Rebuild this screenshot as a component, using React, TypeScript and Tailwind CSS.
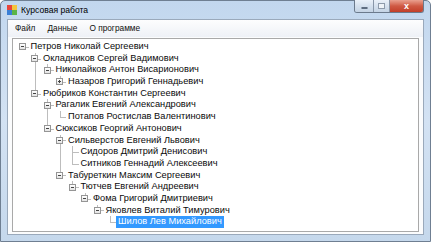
import { Fragment } from "react";

type Node = {
  name: string;
  open?: boolean;
  selected?: boolean;
  children?: Node[];
};

const tree: Node = {
  name: "Петров Николай Сергеевич",
  open: true,
  children: [
    {
      name: "Окладников Сергей Вадимович",
      open: true,
      children: [
        {
          name: "Николайков Антон Висарионович",
          open: true,
          children: [{ name: "Назаров Григорий Геннадьевич", open: false, children: [{ name: "" }] }],
        },
      ],
    },
    {
      name: "Рюбриков Константин Сергеевич",
      open: true,
      children: [
        {
          name: "Рагалик Евгений Александрович",
          open: true,
          children: [{ name: "Потапов Ростислав Валентинович" }],
        },
        {
          name: "Сюксиков Георгий Антонович",
          open: true,
          children: [
            {
              name: "Сильверстов Евгений Львович",
              open: true,
              children: [
                { name: "Сидоров Дмитрий Денисович" },
                { name: "Ситников Геннадий Алексеевич" },
              ],
            },
            {
              name: "Табуреткин Максим Сергеевич",
              open: true,
              children: [
                {
                  name: "Тютчев Евгений Андреевич",
                  open: true,
                  children: [
                    {
                      name: "Фома Григорий Дмитриевич",
                      open: true,
                      children: [
                        {
                          name: "Яковлев Виталий Тимурович",
                          open: true,
                          children: [{ name: "Шилов Лев Михайлович", selected: true }],
                        },
                      ],
                    },
                  ],
                },
              ],
            },
          ],
        },
      ],
    },
  ],
};

type Row = { node: Node; level: number; isRoot: boolean; isLast: boolean; rails: boolean[] };

function flatten(node: Node, level: number, isLast: boolean, rails: boolean[], out: Row[]) {
  out.push({ node, level, isRoot: level === 0, isLast, rails });
  if (node.open && node.children) {
    node.children.forEach((c, i) => {
      const last = i === node.children!.length - 1;
      flatten(c, level + 1, last, [...rails, level === 0 ? false : !isLast], out);
    });
  }
}

const rows: Row[] = [];
flatten(tree, 0, true, [], rows);

function Expander({ open }: { open: boolean }) {
  return (
    <div className="relative z-10 flex h-[7px] w-[7px] items-center justify-center border border-[#959595] bg-gradient-to-b from-white to-[#e4e4e4]">
      <div className="h-px w-[3px] bg-[#444]" />
      {!open && <div className="absolute h-[3px] w-px bg-[#444]" />}
    </div>
  );
}

function TreeRow({ row }: { row: Row }) {
  const hasKids = !!row.node.children;
  return (
    <div className="flex h-[11.7px] items-center">
      {row.rails.map((r, i) => (
        <div key={i} className="relative h-full w-[12.5px] shrink-0">
          {r && <div className="absolute left-[6px] top-0 h-full w-px bg-[#bdbdbd]" />}
        </div>
      ))}
      <div className="relative flex h-full w-[12.5px] shrink-0 items-center justify-center">
        {!row.isRoot && (
          <div
            className={
              "absolute left-[6px] top-0 w-px bg-[#bdbdbd] " + (row.isLast ? "h-1/2" : "h-full")
            }
          />
        )}
        <div className="absolute left-[6px] right-0 top-1/2 h-px bg-[#bdbdbd]" />
        {hasKids && <Expander open={!!row.node.open} />}
      </div>
      <span
        className={
          "whitespace-nowrap px-[2px] leading-[11.7px] " +
          (row.node.selected ? "bg-[#3399ff] text-white" : "text-[#0a0a0a]")
        }
      >
        {row.node.name}
      </span>
    </div>
  );
}

export default function App() {
  return (
    <div className="h-[242px] w-[431px] overflow-hidden bg-white font-['Liberation_Sans',Arial,sans-serif]">
      <div className="flex h-[242px] w-[431px] flex-col rounded-t-[5px] border border-[#6f7f92] bg-gradient-to-b from-[#c2d7ee] via-[#d3e2f3] to-[#c5d8ec] px-[6px] pb-[6px]">
        {/* title bar */}
        <div className="flex h-[18px] shrink-0 items-start">
          <div className="mt-[4px] flex items-center">
            <svg width="10" height="10" viewBox="0 0 10 10" className="mr-[4px]">
              <rect x="0" y="0" width="5" height="5" fill="#e8443a" />
              <rect x="5" y="0" width="5" height="5" fill="#f3c43c" />
              <rect x="0" y="5" width="5" height="5" fill="#3a7fd6" />
              <rect x="5" y="5" width="5" height="5" fill="#5bb548" />
            </svg>
            <span className="text-[8.6px] leading-[10px] text-black">Курсовая работа</span>
          </div>
          <div className="ml-auto flex h-[13px] -mt-px overflow-hidden rounded-b-[3px] border border-t-0 border-[#6b7a8c]">
            <div className="flex w-[19px] items-center justify-center border-r border-[#8896a8] bg-gradient-to-b from-[#eaf1f9] via-[#d5e1ee] to-[#c4d3e4]">
              <div className="mt-[3px] h-[2px] w-[7px] rounded-[1px] border border-[#5e6d80] bg-white" />
            </div>
            <div className="flex w-[16px] items-center justify-center border-r border-[#8896a8] bg-gradient-to-b from-[#eaf1f9] via-[#d5e1ee] to-[#c4d3e4]">
              <div className="h-[6px] w-[7px] border border-[#8e9bab] bg-[#eef3f8]" />
            </div>
            <div className="flex w-[33px] items-center justify-center bg-gradient-to-b from-[#e9a08f] via-[#cf5a44] to-[#c23e28]">
              <span className="text-[9px] font-bold leading-none text-white">x</span>
            </div>
          </div>
        </div>

        {/* client */}
        <div className="flex min-h-0 flex-1 flex-col border border-[#9aa9bb] bg-[#fbfcfd]">
          <div className="flex h-[17px] shrink-0 items-center bg-gradient-to-b from-[#fdfdfe] to-[#eef1f6] pl-[7px] text-[8.3px] text-[#111]">
            <span>Файл</span>
            <span className="ml-[12px]">Данные</span>
            <span className="ml-[12px]">О программе</span>
          </div>
          <div className="mx-[4px] mb-[2px] mt-[1px] flex-1 border border-[#a9a9a9] bg-white pl-[3px] pt-[2px] text-[9.25px]">
            {rows.map((r, i) => (
              <Fragment key={i}>
                <TreeRow row={r} />
              </Fragment>
            ))}
          </div>
        </div>
      </div>
    </div>
  );
}
